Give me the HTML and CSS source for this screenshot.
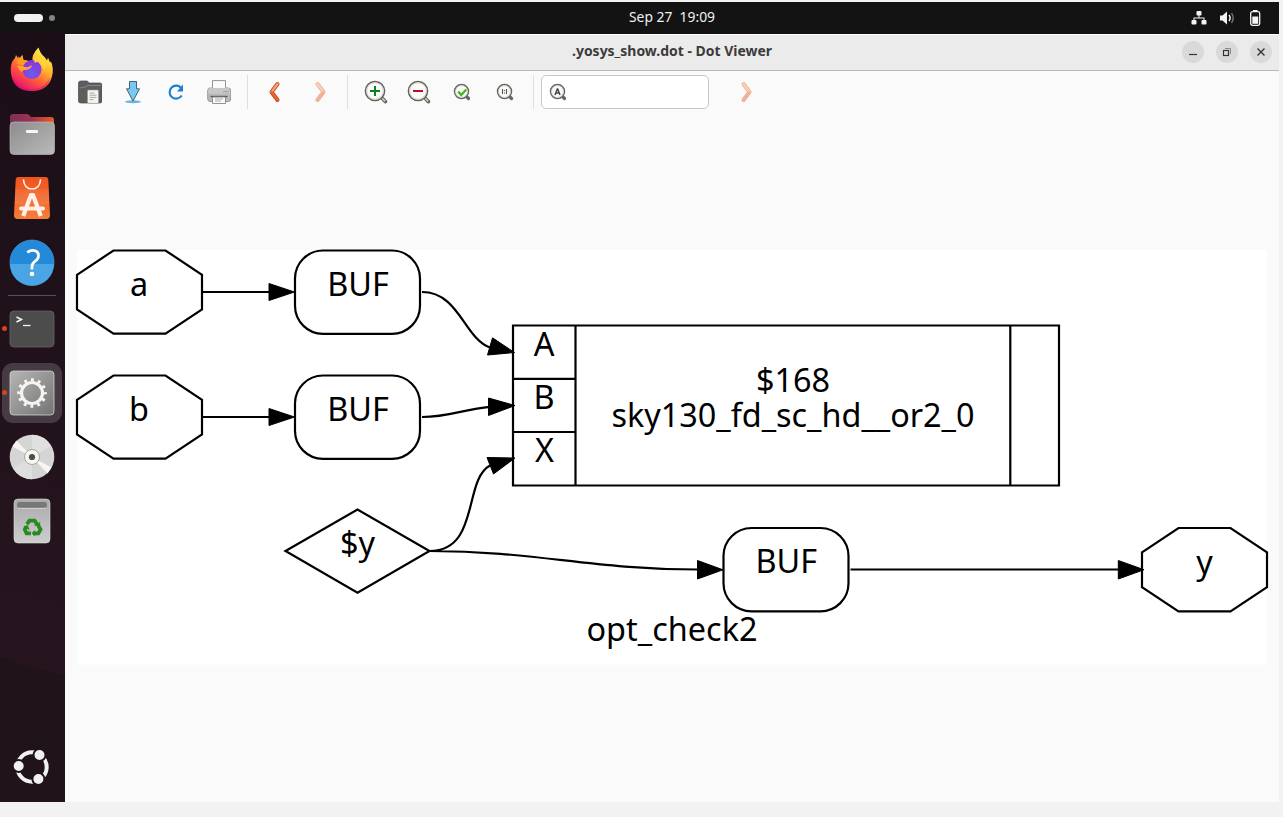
FILE: index.html
```html
<!DOCTYPE html>
<html lang="en">
<head>
<meta charset="utf-8">
<title>.yosys_show.dot - Dot Viewer</title>
<link rel="stylesheet" href="styles.css">
</head>
<body>
<div class="screen">
  <header class="topbar">
    <div class="workspaces"><span class="pill"></span><span class="dot"></span></div>
    <div class="clock"><svg width="88" height="24"><text x="1" y="16" textLength="86" lengthAdjust="spacingAndGlyphs" xml:space="preserve">Sep 27  19:09</text></svg></div>
    <div class="tray">
      <svg width="16" height="16" viewBox="0 0 16 16" fill="#f4f4f4"><rect x="5.500" y="1" width="5" height="4.500" rx="1"/><rect x="0.500" y="10" width="5" height="4.500" rx="1"/><rect x="10.500" y="10" width="5" height="4.500" rx="1"/><path d="M7.500 5h1v2.500h5V11h-1V8.500h-9V11h-1V7.500h5z"/></svg>
      <svg width="16" height="16" viewBox="0 0 16 16"><path d="M1 5.500h2.500L8 1.500v13L3.500 10.500H1z" fill="#f4f4f4"/><path d="M10 5q2.200 3 0 6" fill="none" stroke="#f4f4f4" stroke-width="1.500"/><path d="M12.500 3.200q3.400 4.800 0 9.600" fill="none" stroke="#777" stroke-width="1.400"/></svg>
      <svg width="16" height="16" viewBox="0 0 16 16"><path d="M6 0h4.500V2H6z" fill="#f4f4f4"/><rect x="3.700" y="1.700" width="9" height="13.600" rx="1.800" fill="none" stroke="#f4f4f4" stroke-width="1.300"/><path d="M5.300 6.500h5.900v7.300H5.300z" fill="#f4f4f4"/></svg>
    </div>
  </header>
  <div class="desktop">
    <nav class="dock">
      <div class="app">
        <svg width="48" height="48" viewBox="0 0 48 48">
          <defs>
            <linearGradient id="fox" x1=".8" y1=".1" x2=".25" y2=".95"><stop offset="0" stop-color="#fff04a"/><stop offset=".35" stop-color="#ffb02a"/><stop offset=".65" stop-color="#ff5a3a"/><stop offset="1" stop-color="#e8106e"/></linearGradient>
            <radialGradient id="globe" cx=".5" cy=".75" r=".8"><stop offset="0" stop-color="#6a5cf0"/><stop offset="1" stop-color="#9030d8"/></radialGradient>
          </defs>
          <path d="M4 16L7 12l1-3 2.500 4 4-4 1 5 9 2Q23 9 30.500 1.500q1.500 6 6.500 10l2 3 1-3 2 5 1-1q3 7 1 15Q40 45 24 45 8 45 4 32 1.500 23 4 16z" fill="url(#fox)"/>
          <circle cx="24" cy="23.500" r="9.500" fill="url(#globe)"/>
          <path d="M14 9l1.500 5q3 0 5 1-4 1-5 4l-6-1 1-8 2.500 4z" fill="#ff9c20"/>
          <path d="M9 20q4-1 8 1 3 1 5-1 1-1 2 0-2 4-7 4-3 0-3 2-3-2-5-6z" fill="#ffa42c"/>
          <path d="M27 17q2-2 4-1 5 3 5 8 4-5 0-10l-4-4-4-2-2 6z" fill="#ffd43a"/>
          <path d="M5 29q5 14 19 14 13 0 18-12-2 14-18 14-15 0-19-16z" fill="#d9107c" opacity=".55"/>
        </svg>
      </div>
      <div class="app">
        <svg width="48" height="48" viewBox="0 0 48 48">
          <defs><linearGradient id="fback"><stop offset="0" stop-color="#7b2f58"/><stop offset=".5" stop-color="#9c3450"/><stop offset="1" stop-color="#f05a22"/></linearGradient><linearGradient id="ffront" x2="1" y2="1"><stop offset="0" stop-color="#8c8c8c"/><stop offset="1" stop-color="#bababa"/></linearGradient></defs>
          <path d="M2 17V7q0-3 3-3h14q2 0 3 2l1 1h20q3 0 3 3v8z" fill="url(#fback)"/>
          <rect x="2" y="12" width="44.500" height="32.500" rx="4" fill="url(#ffront)" stroke="#c2c2c2" stroke-width=".6"/>
          <rect x="18" y="20" width="12" height="3" rx="1" fill="#f6f6f6"/>
        </svg>
      </div>
      <div class="app">
        <svg width="48" height="48" viewBox="0 0 48 48">
          <defs><linearGradient id="bag" x2="0" y2="1"><stop offset="0" stop-color="#ef531e"/><stop offset="1" stop-color="#f57d3c"/></linearGradient></defs>
          <path d="M10 3h28q2 0 2.300 2.500L42 41q0 4-3.500 4h-29Q6 45 6 41L7.700 5.500Q8 3 10 3z" fill="url(#bag)"/>
          <path d="M7.400 15.500h33.200l.7 15H6.700z" fill="#fff" opacity=".08"/>
          <path d="M15.500 6q1 9 8.500 9t8.500-9" fill="none" stroke="#fff0e8" stroke-width="1.700" stroke-linecap="round"/>
          <path d="M15.200 42L23 21h2l7.800 21" fill="none" stroke="#fff0e8" stroke-width="4.200" stroke-linejoin="round"/>
          <path d="M13 34.500h22" stroke="#fff0e8" stroke-width="3.800" stroke-linecap="round"/>
        </svg>
      </div>
      <div class="app">
        <svg width="48" height="48" viewBox="0 0 48 48">
          <circle cx="24" cy="24" r="22" fill="#2489d8" stroke="#57a9e8" stroke-width=".6"/>
          <path d="M2 26h44a22 22 0 0 1-44 0z" fill="#49a5e3"/>
          <path d="M19.300 14.500q2-2.200 5-2.200 6.200 0 6.200 5.200 0 3.500-3.300 5.700Q24 25.500 24 28.500v3" fill="none" stroke="#fff" stroke-width="2.700"/>
          <circle cx="24" cy="36" r="2.300" fill="#fff"/>
        </svg>
      </div>
      <div class="divider"></div>
      <div class="app running">
        <svg width="48" height="48" viewBox="0 0 48 48">
          <rect x="2" y="6" width="44" height="36" rx="4" fill="#4c4c4c" stroke="#666" stroke-width=".8"/>
          <path d="M8.500 12l5 2.500-5 2.500" fill="none" stroke="#f4f4f4" stroke-width="1.500"/><path d="M15 20.500h7.500" stroke="#f4f4f4" stroke-width="1.300"/>
        </svg>
      </div>
      <div class="app running active">
        <svg width="48" height="48" viewBox="0 0 48 48">
          <defs><linearGradient id="cfg" x2="1" y2="1"><stop offset="0" stop-color="#b5b5b5"/><stop offset="1" stop-color="#747474"/></linearGradient></defs>
          <rect x="2" y="2" width="44" height="44" rx="3.500" fill="url(#cfg)" stroke="#d2d2d2" stroke-width=".8"/>
          <circle cx="24" cy="24" r="10.500" fill="none" stroke="#f4f4f0" stroke-width="3.200"/>
          <circle cx="24" cy="24" r="13.200" fill="none" stroke="#f4f4f0" stroke-width="3.200" stroke-dasharray="2.900 4.011" stroke-dashoffset="1.450"/>
        </svg>
      </div>
      <div class="app">
        <svg width="48" height="48" viewBox="0 0 48 48">
          <circle cx="24" cy="24" r="22.300" fill="#d5d5d5"/>
          <path d="M24 24V1.700A22.300 22.300 0 0 1 43 13z" fill="#e0e0e0"/><path d="M24 24v22.300A22.300 22.300 0 0 1 5 35z" fill="#dedede"/>
          <path d="M24 24L4.500 13.500l4-6z" fill="#f7f6f3"/><path d="M24 24l19.500 10.500-4 6z" fill="#f7f6f3"/>
          <circle cx="24" cy="24" r="7.500" fill="#f7f6f1" stroke="#aaa696"/><circle cx="24" cy="24" r="3.100" fill="#4c4c4c"/>
        </svg>
      </div>
      <div class="app">
        <svg width="48" height="48" viewBox="0 0 48 48">
          <defs><linearGradient id="bin" x2="0" y2="1"><stop offset="0" stop-color="#aaa"/><stop offset="1" stop-color="#cdcdcd"/></linearGradient></defs>
          <rect x="6" y="2" width="36" height="44" rx="4" fill="url(#bin)" stroke="#dedede" stroke-width=".6"/>
          <rect x="9" y="5" width="30" height="5.800" rx="2.500" fill="#777"/><path d="M10 11.500h28" stroke="#ddd" stroke-width=".7"/>
          <g transform="translate(2.400 2.900) scale(.9)"><g fill="none" stroke="#268b20" stroke-width="4.200"><path d="M18.500 27l2.500-4h6l2.500 4"/><path d="M31 28.500l2.500 4.500-2.500 4.300h-6"/><path d="M22.800 37.300H18L16 33l1.700-3.500"/></g>
          <g fill="#268b20"><path d="M26 28.500l7-4v5z"/><path d="M27.500 33.500v7l-4-3.500z"/><path d="M14.500 30l4.500-2.500 2.500 6z"/></g></g>
        </svg>
      </div>
      <div class="app launcher">
        <svg width="48" height="48" viewBox="0 0 48 48">
          <circle cx="24" cy="24" r="14.700" fill="none" stroke="#f2f0f1" stroke-width="4"/>
          <g fill="#f2f0f1" stroke="#20141b" stroke-width="2"><circle cx="10.700" cy="23" r="6"/><circle cx="31.500" cy="12" r="6"/><circle cx="30.400" cy="36" r="6"/></g>
        </svg>
      </div>
    </nav>
    <main class="window">
      <div class="titlebar">
        <div class="title"><svg width="202" height="28"><text x="1" y="18" textLength="200" lengthAdjust="spacingAndGlyphs">.yosys_show.dot - Dot Viewer</text></svg></div>
        <div class="controls">
          <span class="control"><svg width="22" height="22"><path d="M7 13.500h8" stroke="#333" stroke-width="1.200"/></svg></span>
          <span class="control"><svg width="22" height="22"><path d="M9 7.500h5.500V13" fill="none" stroke="#888"/><rect x="7.500" y="9.500" width="5" height="5" fill="none" stroke="#333" stroke-width="1.200"/></svg></span>
          <span class="control"><svg width="22" height="22"><path d="M7.500 7.500l7 7m0-7l-7 7" stroke="#333" stroke-width="1.400"/></svg></span>
        </div>
      </div>
      <div class="toolbar">
        <div class="group files">
          <svg width="24" height="24" viewBox="0 0 24 24"><path d="M.5 21V3Q.5 1 3 1h6l2.500 2H22q2 0 2 2v16q0 2-2 2H3q-2.500 0-2.500-2z" fill="#5e5e5e" stroke="#484848" stroke-width=".7"/><path d="M1.500 8q5 0 8.500-2.500h13" fill="none" stroke="#858585"/><rect x="9.500" y="10" width="11" height="13.300" rx="1" fill="#f5f5f1" stroke="#999" stroke-width=".6"/><path d="M11.500 13h5m-5 2.200h7m-7 2.200h7m-7 2.200h4" stroke="#aaa79b"/></svg>
          <svg width="24" height="24" viewBox="0 0 24 24"><ellipse cx="12" cy="21.800" rx="8" ry="1.500" fill="#63b4e4"/><path d="M8.500 1.500h7v7.300h3L12 21 5.500 8.800h3z" fill="#79c8f2" stroke="#466273" stroke-width="1"/></svg>
          <svg width="24" height="24" viewBox="0 0 24 24"><path d="M17.300 8.200A6.500 6.500 0 1 0 17.700 15.500" fill="none" stroke="#1b80d3" stroke-width="2.200"/><path d="M19 4.500v7h-6z" fill="#1b80d3"/></svg>
          <svg width="24" height="24" viewBox="0 0 24 24"><rect x=".7" y="8" width="23" height="13.500" rx="2.500" fill="#bcbcbc" stroke="#878787" stroke-width=".8"/><path d="M5.500.6h13v9h-13z" fill="#fbfbfb" stroke="#888" stroke-width=".9"/><path d="M2 7.500h3.500v.500h13v-.500H22l1.500 6h-23z" fill="#c8c8c8"/><path d="M3.500 16.500h17" stroke="#555" stroke-width="1.400"/><path d="M5.500 17h13v6.500h-13z" fill="#fafafa" stroke="#888" stroke-width=".9"/><path d="M8 19h8m-8 2h6" stroke="#aaa"/><path d="M16.500 11.700h1m1 0h1" stroke="#d44"/><path d="M20.500 11.700h1" stroke="#4a4"/></svg>
        </div>
        <span class="separator"></span>
        <div class="group history">
          <svg width="24" height="24" viewBox="0 0 24 24"><path d="M14.500 4l-6 8 6 8" fill="none" stroke="#b8481c" stroke-width="4" stroke-linecap="round" stroke-linejoin="round"/><path d="M14.500 4l-6 8" stroke="#f5a36b" stroke-width="2.300" stroke-linecap="round"/><path d="M8.500 12l6 8" stroke="#ed662d" stroke-width="2.300" stroke-linecap="round"/></svg>
          <svg width="24" height="24" viewBox="0 0 24 24"><path d="M9.500 4l6 8-6 8" fill="none" stroke="#e9ad92" stroke-width="4" stroke-linecap="round" stroke-linejoin="round"/><path d="M9.500 4l6 8" stroke="#f8d2b5" stroke-width="2.500" stroke-linecap="round"/><path d="M15.500 12l-6 8" stroke="#f2b299" stroke-width="2.500" stroke-linecap="round"/></svg>
        </div>
        <span class="separator"></span>
        <div class="group zoom">
          <svg width="24" height="24" viewBox="0 0 24 24"><path d="M17.500 17.500l3.800 4" stroke="#62625c" stroke-width="3.800" stroke-linecap="round"/><path d="M18 18l3.200 3.300" stroke="#c3c3bc" stroke-width="1.800"/><circle cx="11" cy="11" r="9.600" fill="#fcfcfa" stroke="#62625c" stroke-width="1.500"/><circle cx="11" cy="11" r="8.300" fill="none" stroke="#cfcfc6"/><path d="M6 11h10m-5-5v10" stroke="#078322" stroke-width="2"/></svg>
          <svg width="24" height="24" viewBox="0 0 24 24"><path d="M17.500 17.500l3.800 4" stroke="#62625c" stroke-width="3.800" stroke-linecap="round"/><path d="M18 18l3.200 3.300" stroke="#c3c3bc" stroke-width="1.800"/><circle cx="11" cy="11" r="9.600" fill="#fcfcfa" stroke="#62625c" stroke-width="1.500"/><circle cx="11" cy="11" r="8.300" fill="none" stroke="#cfcfc6"/><path d="M6 11h10" stroke="#c30b2b" stroke-width="2"/></svg>
          <svg width="24" height="24" viewBox="0 0 24 24"><path d="M16 16l2.500 2.500" stroke="#666760" stroke-width="3.200" stroke-linecap="round"/><circle cx="11.500" cy="11.500" r="7" fill="#fafaf8" stroke="#666760" stroke-width="1.500"/><circle cx="11.500" cy="11.500" r="5.900" fill="none" stroke="#cfcfc6" stroke-width=".8"/><path d="M8.200 11.500l3 3.500 5-5.500" fill="none" stroke="#45b51a" stroke-width="2.300"/></svg>
          <svg width="24" height="24" viewBox="0 0 24 24"><path d="M16 16l2.500 2.500" stroke="#666760" stroke-width="3.200" stroke-linecap="round"/><circle cx="11.500" cy="11.500" r="7" fill="#fafaf8" stroke="#666760" stroke-width="1.500"/><circle cx="11.500" cy="11.500" r="5.900" fill="none" stroke="#cfcfc6" stroke-width=".8"/><path d="M9.500 9v5m4-5v5m-2-4v1m0 1.500v1" stroke="#555" stroke-width="1.100"/></svg>
        </div>
        <span class="separator"></span>
        <label class="search">
          <svg width="24" height="24" viewBox="0 0 24 24"><path d="M16 16l2.500 2.500" stroke="#666760" stroke-width="3.200" stroke-linecap="round"/><circle cx="11.500" cy="11.500" r="7" fill="#fafaf8" stroke="#666760" stroke-width="1.500"/><circle cx="11.500" cy="11.500" r="5.900" fill="none" stroke="#cfcfc6" stroke-width=".8"/><path d="M9 15l2.300-6h.4l2.300 6m-4-2h3" fill="none" stroke="#444b50" stroke-width="1.500"/></svg>
        </label>
        <svg class="find-next" width="24" height="24" viewBox="0 0 24 24"><path d="M9.500 4l6 8-6 8" fill="none" stroke="#e9ad92" stroke-width="4" stroke-linecap="round" stroke-linejoin="round"/><path d="M9.500 4l6 8" stroke="#f8d2b5" stroke-width="2.500" stroke-linecap="round"/><path d="M15.500 12l-6 8" stroke="#f2b299" stroke-width="2.500" stroke-linecap="round"/></svg>
      </div>
      <svg class="graph" width="1214" height="689" viewBox="65 113 1214 689">
        <rect x="77" y="250" width="1190" height="414.500" fill="#fff"/>
        <g class="shape">
          <path d="M77 274.800L113.500 250.500h52L202 274.800v34.700L165.500 333.700h-52L77 309.500z"/>
          <path d="M77 399.800L113.500 375.500h52L202 399.800v34.700L165.500 458.700h-52L77 434.500z"/>
          <path d="M1142 552.400L1178.500 528h52L1267 552.400v34.700L1230.500 611.300h-52L1142 587.100z"/>
          <rect x="295" y="250.500" width="125" height="83.300" rx="28"/>
          <rect x="295" y="375.500" width="125" height="83.300" rx="28"/>
          <rect x="723.500" y="528" width="125" height="83.300" rx="28"/>
          <path d="M285.500 551L357.500 509.500 429.500 551 357.500 592.700z"/>
          <path d="M513 325.500h546v160H513zM575.500 325.500v160M1010.300 325.500v160M513 378.800h62.500M513 432h62.500"/>
          <path d="M202 292h68M202 417h68M422 292C459 292 464 338 490 347.500M422 417C449 417 464 409 490 406.800M429.500 551C480 551 463 480 490 465.500M429.500 551C535 551 590 569.500 698 569.500M850.500 569.500h268"/>
        </g>
        <g class="arrow">
          <path d="M269 283.500v17L294.500 292zM269 408.500v17L294.500 417zM492.500 337.800L487.500 355 514.500 352.500zM488.500 398v17.500L515 405.500zM487 457.500l6.500 16.500L515 458zM697.500 560.500v18.500L723 569.800zM1118.300 560.500v18.500L1144 569.700z"/>
        </g>
        <g class="label">
          <text x="139" y="296">a</text><text x="139" y="421">b</text><text x="1204.500" y="573.500">y</text>
          <text x="358" y="296">BUF</text><text x="358" y="421">BUF</text><text x="786.300" y="573.300">BUF</text>
          <text x="544" y="356.300">A</text><text x="544" y="409.300">B</text><text x="544.500" y="462.300">X</text>
          <text x="793" y="391.500">$168</text><text x="793" y="426.500" textLength="363">sky130_fd_sc_hd__or2_0</text>
          <text x="357.500" y="555.300">$y</text><text x="672" y="641.300" textLength="171">opt_check2</text>
        </g>
      </svg>
    </main>
  </div>
</div>
</body>
</html>
```
FILE: styles.css
```css
* { box-sizing: border-box; }
body { margin: 0; padding-top: 2px; height: 817px; overflow: hidden; background: #f2f2f2; font-family: "Noto Sans", sans-serif; }
svg { display: block; flex-shrink: 0; }
.screen { width: 1279px; height: 800px; display: flex; flex-direction: column; }
.topbar { height: 32px; display: flex; align-items: center; padding: 0 16px 0 14px; background: #131313; border-bottom: 1px solid #1b0d15; }
.workspaces { flex: 0 0 614px; display: flex; align-items: center; gap: 6px; }
.pill { width: 29px; height: 8px; border-radius: 4px; background: #f2f2f2; }
.dot { width: 6px; height: 6px; border-radius: 50%; background: #858585; }
.clock { width: 88px; }
.clock text { font-size: 13.5px; fill: #f0f0f0; }
.tray { flex: 1; display: flex; justify-content: flex-end; gap: 12px; }
.desktop { flex: 1; display: flex; min-height: 0; }
.dock { width: 65px; padding: 4px 1px 3px 0; display: flex; flex-direction: column; align-items: center; background: linear-gradient(196deg, #1b0e16, #26151f 81.5%, #20141a 81.7%, #20141a); }
.app { width: 64px; height: 64px; display: grid; place-items: center; position: relative; flex-shrink: 0; }
.divider { width: 48px; height: 1px; margin: 1px 0; background: #555055; flex-shrink: 0; }
.launcher { margin-top: auto; }
.running::before { content: ""; position: absolute; left: 2px; top: 29px; width: 5px; height: 5px; border-radius: 50%; background: #d7441b; z-index: 1; }
.active::after { content: ""; position: absolute; inset: 2px; border-radius: 11px; background: #463b43; }
.active svg { position: relative; z-index: 1; }
.window { width: 1214px; display: flex; flex-direction: column; background: #fafafa; }
.titlebar { height: 37px; display: grid; grid-template-columns: 1fr 202px 1fr; align-items: center; background: #ebebeb; border-top: 1px solid #fff; border-bottom: 1px solid #b9b9b9; padding: 0 7px 1px; }
.title { grid-column: 2; }
.title text { font-size: 14px; font-weight: 700; fill: #3b3b3b; }
.controls { display: flex; justify-content: flex-end; gap: 12px; }
.control { width: 22px; height: 22px; border-radius: 50%; background: #d9d9d9; }
.toolbar { height: 42px; display: flex; align-items: center; padding-left: 13px; }
.group { display: flex; }
.files, .zoom { gap: 19px; }
.history { gap: 21px; margin: 0 15px; }
.zoom { margin-left: 16px; }
.files, .zoom { margin-right: 16px; }
.separator { width: 1px; height: 34px; background: #dedede; }
.search { width: 168px; height: 34px; margin-left: 7px; padding: 0 4px; display: flex; align-items: center; background: #fff; border: 1px solid #c8c8c8; border-radius: 5px; }
.find-next { margin-left: 25px; }
.shape { fill: none; stroke: #000; stroke-width: 2.2; }
.arrow { fill: #000; stroke: #000; stroke-width: 1; }
.label { font-size: 32.4px; fill: #000; text-anchor: middle; }
```
